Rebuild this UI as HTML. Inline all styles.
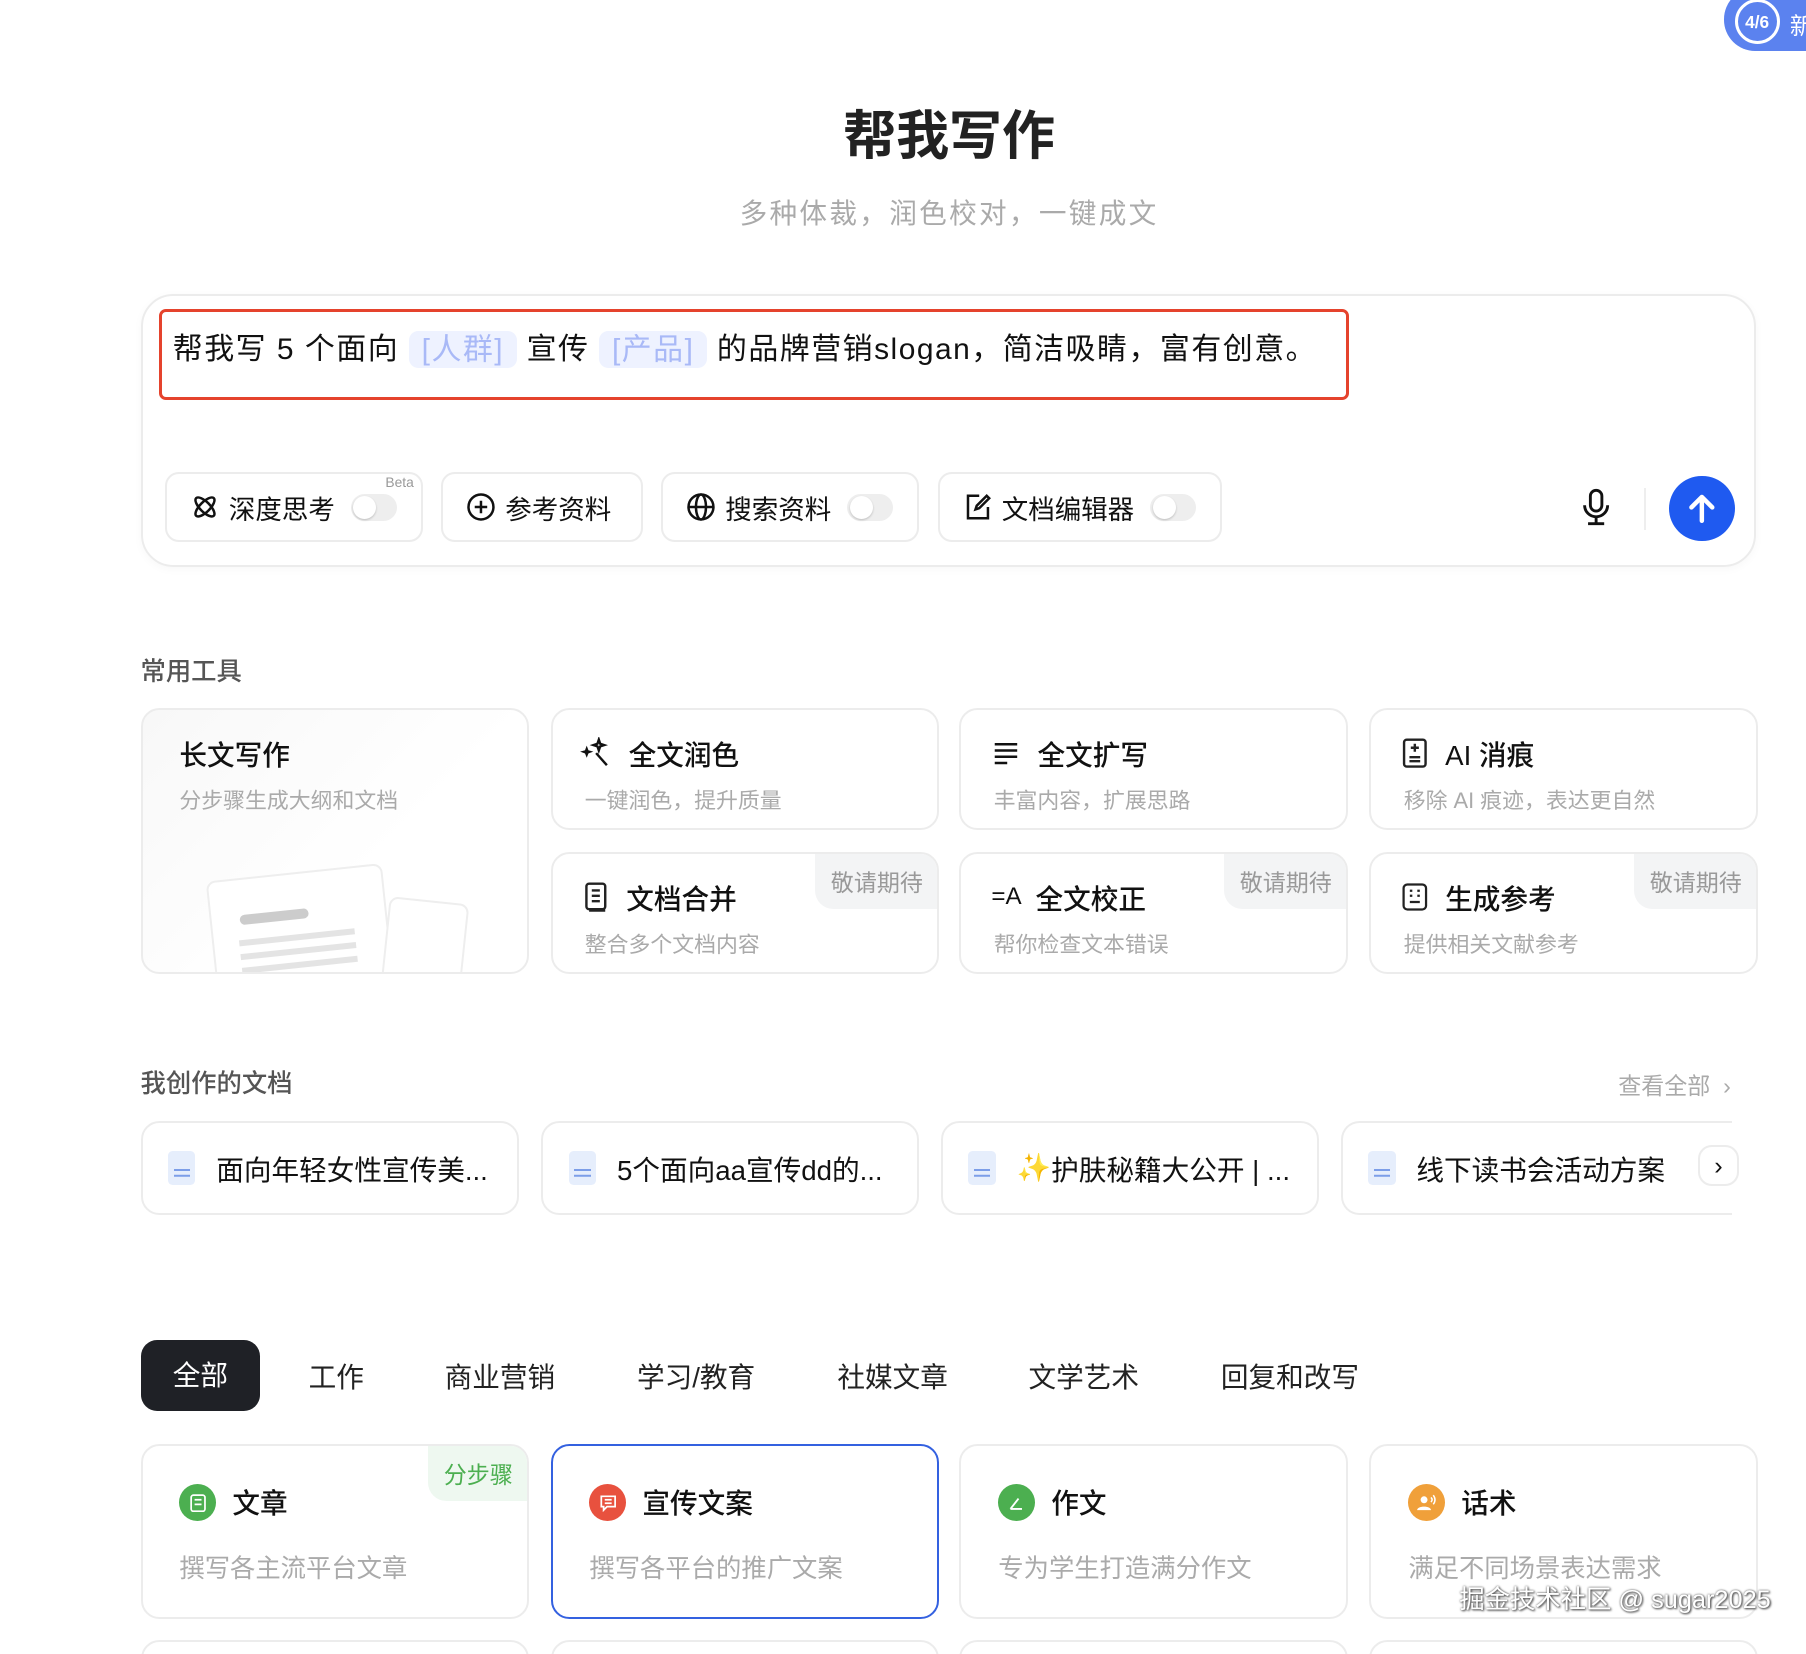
<!DOCTYPE html>
<html><head><meta charset="utf-8">
<style>
html,body{margin:0;padding:0;background:#fff;overflow:hidden;width:1806px;height:1654px}
#w{position:relative;width:1568px;height:1436px;zoom:1.15179;font-family:"Liberation Sans","Noto Sans CJK SC",sans-serif;color:#111}
.a{position:absolute}
.card{position:absolute;border:2px solid #ececec;border-radius:16px;background:#fff;box-sizing:border-box}
.t{position:absolute;font-size:24px;font-weight:500;color:#111;white-space:nowrap;display:flex;align-items:center}
.d{position:absolute;font-size:19px;color:#aaa;white-space:nowrap}
.tag{position:absolute;right:0;top:0;background:#f3f4f5;color:#999;font-size:20px;padding:8px 12px 10px 14px;border-radius:0 14px 0 16px}
.btn{position:absolute;top:410px;height:61px;border:2px solid #ececec;border-radius:12px;box-sizing:border-box;font-size:23px;display:flex;align-items:center;padding-left:20px;gap:8px;white-space:nowrap}
.tg{width:40px;height:24px;border-radius:12px;background:#eee;position:relative;margin-left:6px}
.tg:after{content:"";position:absolute;left:2px;top:2px;width:20px;height:20px;border-radius:50%;background:#fff;box-shadow:0 1px 2px rgba(0,0,0,.2)}
.doc{position:absolute;top:973px;height:82px;border:2px solid #ececec;border-radius:16px;box-sizing:border-box;display:flex;align-items:center;padding-left:22px;font-size:24px;white-space:nowrap;overflow:hidden}
.di{width:24px;height:30px;background:#e6eefc;border-radius:4px;margin-right:18px;position:relative;flex:none}
.di:after{content:"";position:absolute;left:5px;top:16px;width:14px;height:2px;background:#7c9ee8;box-shadow:0 5px 0 #7c9ee8}
.tab{position:absolute;top:1176px;font-size:24px;color:#222}
.ic{position:absolute;width:32px;height:32px;border-radius:50%;display:flex;align-items:center;justify-content:center}
.t svg{margin-right:14px}
</style></head><body><div id="w">
<div class="a" style="left:1497px;top:-10px;width:100px;height:54px;border-radius:27px;background:#5b82ef"></div>
<div class="a" style="left:1506px;top:-1px;width:34px;height:34px;border-radius:50%;border:3px solid #fff;color:#fff;font-size:15px;font-weight:700;text-align:center;line-height:36px">4/6</div>
<div class="a" style="left:1554px;top:6px;color:#fff;font-size:20px">新</div>

<div class="a" style="left:0;width:1648px;top:82px;text-align:center;font-size:46px;font-weight:700;color:#222">帮我写作</div>
<div class="a" style="left:0;width:1648px;top:166px;text-align:center;font-size:24px;color:#aaa;letter-spacing:2px">多种体裁，润色校对，一键成文</div>

<div class="a" style="left:122px;top:255px;width:1403px;height:237px;border:2px solid #ececec;border-radius:28px;box-sizing:border-box;box-shadow:0 2px 8px rgba(0,0,0,.03)"></div>
<div class="a" style="left:138px;top:268px;width:1033px;height:79px;border:3px solid #e5432d;border-radius:6px;box-sizing:border-box"></div>
<div class="a" style="left:150px;top:284px;font-size:26px;white-space:nowrap;line-height:40px;letter-spacing:1.3px">帮我写 5 个面向 <span style="background:#eef2ff;color:#a9b9f7;padding:2px 11px;border-radius:8px">[人群]</span> 宣传 <span style="background:#eef2ff;color:#a9b9f7;padding:2px 11px;border-radius:8px">[产品]</span> 的品牌营销slogan，简洁吸睛，富有创意。</div>

<div class="btn" style="left:143px;width:224px"><svg width="26" height="26" viewBox="0 0 24 24" fill="none" stroke="#111" stroke-width="2"><ellipse cx="12" cy="12" rx="10" ry="4" transform="rotate(45 12 12)"/><ellipse cx="12" cy="12" rx="10" ry="4" transform="rotate(-45 12 12)"/></svg>深度思考<span class="tg"></span><span class="a" style="right:6px;top:0;font-size:12px;color:#999">Beta</span></div>
<div class="btn" style="left:383px;width:175px"><svg width="26" height="26" viewBox="0 0 24 24" fill="none" stroke="#111" stroke-width="2"><circle cx="12" cy="12" r="10"/><path d="M12 7v10M7 12h10"/></svg>参考资料</div>
<div class="btn" style="left:574px;width:224px"><svg width="26" height="26" viewBox="0 0 24 24" fill="none" stroke="#111" stroke-width="2"><circle cx="12" cy="12" r="10"/><ellipse cx="12" cy="12" rx="4" ry="10"/><path d="M2 12h20"/></svg>搜索资料<span class="tg"></span></div>
<div class="btn" style="left:814px;width:247px"><svg width="26" height="26" viewBox="0 0 24 24" fill="none" stroke="#111" stroke-width="2"><path d="M13 3H4v18h16v-9"/><path d="M10 14l1-3 8-8 2 2-8 8z"/></svg>文档编辑器<span class="tg"></span></div>

<svg class="a" style="left:1372px;top:424px" width="28" height="34" viewBox="0 0 28 34" fill="none" stroke="#111" stroke-width="2.5"><rect x="9" y="2" width="10" height="18" rx="5"/><path d="M4 15a10 10 0 0 0 20 0M14 25v6M7 31h14"/></svg>
<div class="a" style="left:1427px;top:424px;width:2px;height:36px;background:#eee"></div>
<div class="a" style="left:1449px;top:413px;width:57px;height:57px;border-radius:50%;background:#1f5af0"></div>
<svg class="a" style="left:1462px;top:426px" width="31" height="31" viewBox="0 0 24 24" fill="none" stroke="#fff" stroke-width="3" stroke-linecap="round" stroke-linejoin="round"><path d="M12 20V4M5 11l7-7 7 7"/></svg>

<div class="a" style="left:122px;top:566px;font-size:22px;color:#555;font-weight:500">常用工具</div>

<div class="card" style="left:122px;top:615px;width:337px;height:231px;background:linear-gradient(135deg,#f8f8f8,#fff 60%);overflow:hidden">
 <div class="t" style="left:32px;top:20px">长文写作</div><div class="d" style="left:32px;top:64px">分步骤生成大纲和文档</div>
 <div class="a" style="left:60px;top:140px;width:150px;height:110px;background:#fff;border:2px solid #eee;border-radius:8px;transform:rotate(-6deg)"><div class="a" style="left:24px;top:30px;width:60px;height:9px;background:#ccc;border-radius:5px"></div><div class="a" style="left:22px;top:52px;width:100px;height:5px;background:#e4e4e4;box-shadow:0 12px 0 #e4e4e4,0 24px 0 #e4e4e4"></div></div>
 <div class="a" style="left:210px;top:165px;width:66px;height:90px;background:#fff;border:2px solid #eee;border-radius:8px;transform:rotate(6deg)"></div>
</div>
<div class="card" style="left:478px;top:615px;width:337px;height:106px"><div class="t" style="left:24px;top:20px"><svg width="28" height="28" viewBox="0 0 24 24" fill="none" stroke="#111" stroke-width="1.8"><path d="M14 2l1 3 3 1-3 1-1 3-1-3-3-1 3-1zM5 9l.6 1.6L7 11l-1.4.5L5 13l-.6-1.5L3 11l1.4-.4z"/><path d="M12 12l8 9"/></svg>全文润色</div><div class="d" style="left:28px;top:64px">一键润色，提升质量</div></div>
<div class="card" style="left:833px;top:615px;width:337px;height:106px"><div class="t" style="left:26px;top:20px"><svg width="26" height="26" viewBox="0 0 24 24" fill="none" stroke="#111" stroke-width="2"><path d="M3 5h18M3 10h18M3 15h18M3 20h10"/></svg>全文扩写</div><div class="d" style="left:28px;top:64px">丰富内容，扩展思路</div></div>
<div class="card" style="left:1189px;top:615px;width:337px;height:106px"><div class="t" style="left:26px;top:20px"><svg width="24" height="28" viewBox="0 0 20 24" fill="none" stroke="#222" stroke-width="1.8"><rect x="2" y="2" width="16" height="20" rx="2"/><path d="M7 8h6M10 5v6M6 15h8M6 18h8"/></svg>AI 消痕</div><div class="d" style="left:28px;top:64px">移除 AI 痕迹，表达更自然</div></div>
<div class="card" style="left:478px;top:740px;width:337px;height:106px"><div class="tag">敬请期待</div><div class="t" style="left:26px;top:20px"><svg width="24" height="28" viewBox="0 0 20 24" fill="none" stroke="#222" stroke-width="1.8"><rect x="3" y="2" width="14" height="19" rx="2"/><path d="M7 7h6M7 11h6M7 15h6M5 22h12"/></svg>文档合并</div><div class="d" style="left:28px;top:64px">整合多个文档内容</div></div>
<div class="card" style="left:833px;top:740px;width:337px;height:106px"><div class="tag">敬请期待</div><div class="t" style="left:26px;top:20px"><span style="font-size:21px;margin-right:12px">=A</span>全文校正</div><div class="d" style="left:28px;top:64px">帮你检查文本错误</div></div>
<div class="card" style="left:1189px;top:740px;width:337px;height:106px"><div class="tag">敬请期待</div><div class="t" style="left:26px;top:20px"><svg width="24" height="26" viewBox="0 0 22 24" fill="none" stroke="#222" stroke-width="1.8"><rect x="2" y="2" width="18" height="20" rx="3"/><path d="M7 7h2M13 7h2M7 11h2M13 11h2M7 16h8"/></svg>生成参考</div><div class="d" style="left:28px;top:64px">提供相关文献参考</div></div>

<div class="a" style="left:122px;top:924px;font-size:22px;color:#555;font-weight:500">我创作的文档</div>
<div class="a" style="left:1405px;top:926px;font-size:20px;color:#aaa">查看全部 &nbsp;›</div>
<div class="doc" style="left:122px;width:329px"><span class="di"></span>面向年轻女性宣传美...</div>
<div class="doc" style="left:470px;width:328px"><span class="di"></span>5个面向aa宣传dd的...</div>
<div class="doc" style="left:817px;width:328px"><span class="di"></span><span style="color:#f4c542">✨</span>护肤秘籍大公开 | ...</div>
<div class="doc" style="left:1164px;width:340px;border-right:none;border-radius:16px 0 0 16px"><span class="di"></span>线下读书会活动方案</div>
<div class="a" style="left:1474px;top:994px;width:36px;height:36px;border:2px solid #ececec;border-radius:12px;background:#fff;text-align:center;line-height:34px;font-size:22px;box-sizing:border-box">›</div>

<div class="a" style="left:122px;top:1163px;width:104px;height:62px;border-radius:14px;background:#1f2126;color:#fff;font-size:24px;text-align:center;line-height:62px">全部</div>
<div class="tab" style="left:268px">工作</div><div class="tab" style="left:386px">商业营销</div><div class="tab" style="left:553px">学习/教育</div><div class="tab" style="left:727px">社媒文章</div><div class="tab" style="left:893px">文学艺术</div><div class="tab" style="left:1060px">回复和改写</div>

<div class="card" style="left:122px;top:1254px;width:337px;height:152px"><div class="tag" style="background:#eef8f0;color:#4caf50">分步骤</div><div class="ic" style="left:32px;top:33px;background:#4caf50"><svg width="14" height="16" viewBox="0 0 14 16" fill="none" stroke="#fff" stroke-width="1.5"><rect x="1" y="1" width="12" height="14" rx="2"/><path d="M4 5h6M4 9h6"/></svg></div><div class="t" style="left:78px;top:30px">文章</div><div class="d" style="left:32px;top:89px;font-size:22px">撰写各主流平台文章</div></div>
<div class="card" style="left:478px;top:1254px;width:337px;height:152px;border-color:#3461e0"><div class="ic" style="left:32px;top:33px;background:#e8513e"><svg width="16" height="16" viewBox="0 0 16 16" fill="none" stroke="#fff" stroke-width="1.5"><path d="M2 2h12v9H7l-3 3v-3H2z"/><path d="M5 5h6M5 8h6"/></svg></div><div class="t" style="left:78px;top:30px">宣传文案</div><div class="d" style="left:32px;top:89px;font-size:22px">撰写各平台的推广文案</div></div>
<div class="card" style="left:833px;top:1254px;width:337px;height:152px"><div class="ic" style="left:32px;top:33px;background:#4caf50"><svg width="16" height="16" viewBox="0 0 16 16" fill="none" stroke="#fff" stroke-width="1.6"><path d="M3 13L10 4M3 13h10"/></svg></div><div class="t" style="left:78px;top:30px">作文</div><div class="d" style="left:32px;top:89px;font-size:22px">专为学生打造满分作文</div></div>
<div class="card" style="left:1189px;top:1254px;width:337px;height:152px"><div class="ic" style="left:32px;top:33px;background:#f0a03a"><svg width="18" height="16" viewBox="0 0 18 16" fill="#fff"><circle cx="7" cy="5" r="3"/><path d="M1 14c0-4 12-4 12 0z"/><path d="M13 3q2 2 0 4M15 1q3 4 0 8" fill="none" stroke="#fff" stroke-width="1.3"/></svg></div><div class="t" style="left:78px;top:30px">话术</div><div class="d" style="left:32px;top:89px;font-size:22px">满足不同场景表达需求</div></div>

<div class="card" style="left:122px;top:1424px;width:337px;height:60px"></div>
<div class="card" style="left:478px;top:1424px;width:337px;height:60px"></div>
<div class="card" style="left:833px;top:1424px;width:337px;height:60px"></div>
<div class="card" style="left:1189px;top:1424px;width:337px;height:60px"></div>

<div class="a" style="left:1267px;top:1372px;font-size:22px;color:#fff;white-space:nowrap;text-shadow:0 0 2px #555,1px 1px 2px #444">掘金技术社区 @ sugar2025</div>
</div></body></html>
